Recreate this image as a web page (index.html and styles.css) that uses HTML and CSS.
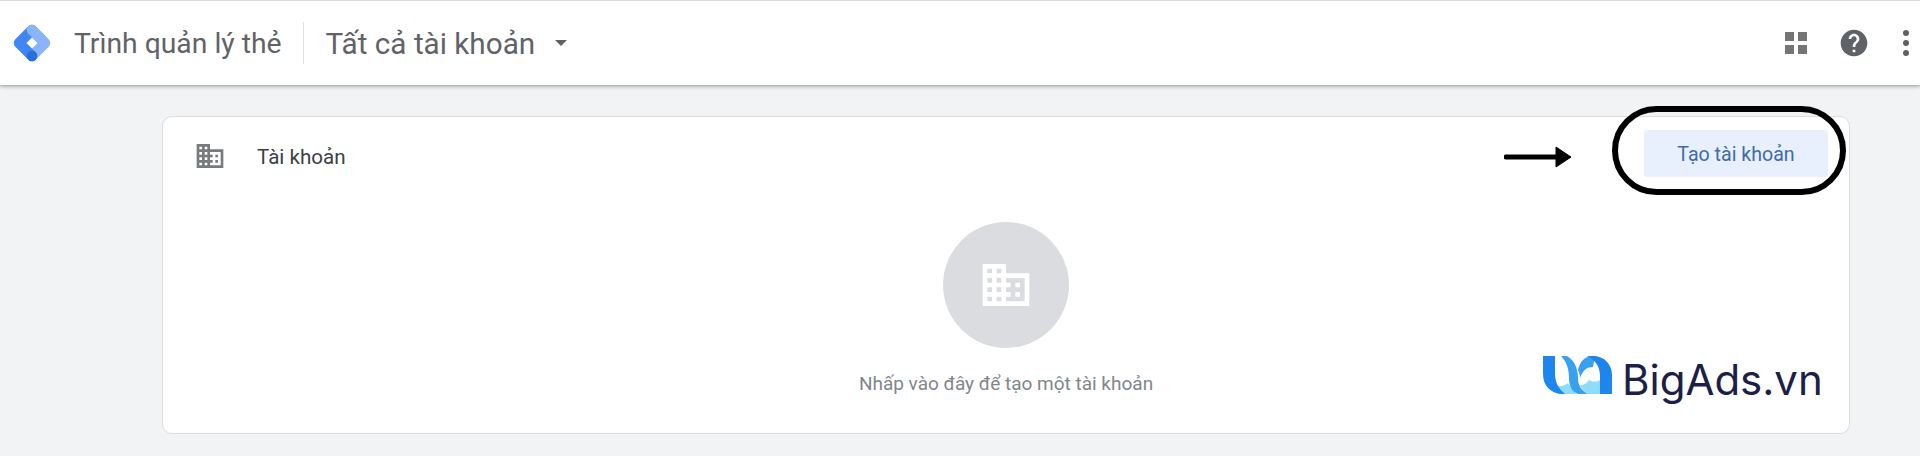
FILE: index.html
```html
<!DOCTYPE html>
<html lang="vi">
<head>
<meta charset="utf-8">
<title>Trình quản lý thẻ</title>
<link rel="stylesheet" href="styles.css">
</head>
<body>
<header class="topbar">
  <svg class="gtm-logo" viewBox="0 0 40 40" width="40" height="40">
    <path d="M20 7 L33 20 L20 33" fill="none" stroke="#8ab4f8" stroke-width="10.5" stroke-linecap="round" stroke-linejoin="round"/>
    <path d="M20 7 L7 20 L20 33" fill="none" stroke="#4285f4" stroke-width="10.5" stroke-linecap="round" stroke-linejoin="round"/>
    <path d="M20 7 L29 16" fill="none" stroke="#8ab4f8" stroke-width="10.5" stroke-linecap="round"/>
    <circle cx="20" cy="33" r="5.3" fill="#2a6fdb"/>
  </svg>
  <span class="product">Trình quản lý thẻ</span>
  <span class="divider"></span>
  <span class="account">Tất cả tài khoản</span>
  <span class="caret"></span>
  <div class="actions">
    <svg class="apps" viewBox="0 0 22 22" width="22" height="22">
      <rect x="0" y="0" width="9" height="9"/><rect x="13" y="0" width="9" height="9"/>
      <rect x="0" y="13" width="9" height="9"/><rect x="13" y="13" width="9" height="9"/>
    </svg>
    <svg class="help" viewBox="0 0 24 24" width="32" height="32">
      <path d="M12 2C6.48 2 2 6.48 2 12s4.48 10 10 10 10-4.48 10-10S17.52 2 12 2zm1 17h-2v-2h2v2zm2.07-7.75l-.9.92C13.45 12.9 13 13.5 13 15h-2v-.5c0-1.1.45-2.1 1.17-2.83l1.24-1.26c.37-.36.59-.86.59-1.41 0-1.1-.9-2-2-2s-2 .9-2 2H8c0-2.21 1.79-4 4-4s4 1.79 4 4c0 .88-.36 1.68-.93 2.25z"/>
    </svg>
    <svg class="more" viewBox="0 0 6 26" width="6" height="26">
      <circle cx="3" cy="3" r="3"/><circle cx="3" cy="13" r="3"/><circle cx="3" cy="23" r="3"/>
    </svg>
  </div>
</header>
<main class="content">
  <section class="card">
    <div class="card-head">
      <svg class="domain" viewBox="0 0 24 24" width="32" height="32">
        <path d="M12 7V3H2v18h20V7H12zM6 19H4v-2h2v2zm0-4H4v-2h2v2zm0-4H4V9h2v2zm0-4H4V5h2v2zm4 12H8v-2h2v2zm0-4H8v-2h2v2zm0-4H8V9h2v2zm0-4H8V5h2v2zm10 12h-8v-2h2v-2h-2v-2h2v-2h-2V9h8v10zm-2-8h-2v2h2v-2zm0 4h-2v2h2v-2z"/>
      </svg>
      <span class="card-title">Tài khoản</span>
      <button class="create">Tạo tài khoản</button>
    </div>
    <div class="empty">
      <div class="empty-circle">
        <svg class="domain-white" viewBox="0 0 24 24" width="56" height="56">
          <path d="M12 7V3H2v18h20V7H12zM6 19H4v-2h2v2zm0-4H4v-2h2v2zm0-4H4V9h2v2zm0-4H4V5h2v2zm4 12H8v-2h2v2zm0-4H8v-2h2v2zm0-4H8V9h2v2zm0-4H8V5h2v2zm10 12h-8v-2h2v-2h-2v-2h2v-2h-2V9h8v10zm-2-8h-2v2h2v-2zm0 4h-2v2h2v-2z" fill-rule="evenodd"/>
        </svg>
      </div>
      <p class="empty-text">Nhấp vào đây để tạo một tài khoản</p>
    </div>
    <svg class="arrow" viewBox="0 0 68 24" width="68" height="24">
      <path d="M2 12 H52" stroke="#000" stroke-width="5" stroke-linecap="round" fill="none"/>
      <path d="M52 2 L67 12 L52 22 Z" fill="#000" stroke="#000" stroke-width="1" stroke-linejoin="round"/>
    </svg>
    <div class="oval"></div>
    <div class="brand">
      <svg class="brand-mark" viewBox="0 0 69 38" width="69" height="38">
        <path d="M8 30 C14 31 20 31 25 27 L33 38 H20 C15 38 11 35 8 30 Z" fill="#8fdcf8"/>
        <path d="M0 0 H12 V17 C12 26 15 32 22 38 H20 C8 38 0 30 0 18 Z" fill="#1c86ee"/>
        <path d="M18 0 H24 C31 4 35 12 35 22 C35 30 39 35 45 38 H35 C29 36 26 30 26 22 C26 12 23 5 18 0 Z" fill="#39a0ef"/>
        <path d="M46 24 C50 26 54 26 57 24 V38 H45 C41 36 38 33 37 29 C41 29 44 27 46 24 Z" fill="#8fdcf8"/>
        <path d="M35 14 C37 5 42 0 50 0 H52 L50 11 C44 11 40 14 37 22 C37 19 36 16 35 14 Z" fill="#39a0ef"/>
        <path d="M44 0 H50 C61 0 69 8 69 19 V38 H57 V20 C57 10 52 4 44 0 Z" fill="#1c86ee"/>
      </svg>
      <span class="brand-name">BigAds.vn</span>
    </div>
  </section>
</main>
</body>
</html>
```
FILE: styles.css
```css
* { box-sizing: border-box; }
html, body { margin: 0; height: 100%; }
body {
  background: #f1f3f4;
  font-family: Roboto, "Noto Sans", sans-serif;
  color: #3c4043;
  overflow: hidden;
}
.topbar {
  height: 85px;
  background: #fff;
  border-top: 1px solid #dcdcdc;
  box-shadow: 0 1px 4px rgba(60, 64, 67, .55);
  display: flex;
  align-items: center;
  padding-left: 12px;
  position: relative;
}
.gtm-logo { flex: none; }
.product, .account { color: #5f6368; white-space: nowrap; }
.product { font-size: 28.3px; margin-left: 22px; }
.divider { width: 1px; height: 42px; background: #e0e0e0; margin-left: 21px; }
.account { font-size: 29.7px; margin-left: 22px; }
.caret {
  width: 0; height: 0;
  margin-left: 20px;
  border-left: 6px solid transparent;
  border-right: 6px solid transparent;
  border-top: 6px solid #5f6368;
}
.actions {
  margin-left: auto;
  display: flex;
  align-items: center;
  gap: 31px;
  padding-right: 11px;
}
.actions svg { flex: none; display: block; fill: #5f6368; }
.actions .apps { fill: #757575; }
.help { margin-right: 2px; }
.content { padding: 31px 70px 0 162px; }
.card {
  position: relative;
  height: 318px;
  background: #fff;
  border: 1px solid #dadce0;
  border-radius: 10px;
}
.card-head {
  height: 78px;
  display: flex;
  align-items: center;
  padding: 0 21px 0 31px;
}
.domain { fill: #777a7e; flex: none; }
.card-title { margin: 2px 0 0 31px; font-size: 20.6px; color: #3c4043; }
.create {
  margin: -5px 0 0 auto;
  width: 184px;
  height: 47px;
  padding: 2px 0 0;
  border: 0;
  border-radius: 3px;
  background: #e8f0fe;
  color: #3f6aa8;
  font: 400 19.6px Roboto, sans-serif;
}
.empty { display: flex; flex-direction: column; align-items: center; padding-top: 27px; }
.empty-circle {
  width: 126px;
  height: 126px;
  border-radius: 50%;
  background: #dadce0;
  display: flex;
  align-items: center;
  justify-content: center;
}
.domain-white { fill: #fff; }
.empty-text { margin: 24px 0 0; font-size: 19px; color: #80868b; }
.arrow { position: absolute; left: 1341px; top: 28px; }
.oval {
  position: absolute;
  left: 1449px;
  top: -11px;
  width: 234px;
  height: 89px;
  border: 6px solid #000;
  border-radius: 45px;
}
.brand {
  position: absolute;
  left: 1380px;
  top: 239px;
  display: flex;
  align-items: flex-start;
  gap: 10px;
}
.brand-mark { flex: none; }
.brand-name {
  font-family: Inter, sans-serif;
  font-size: 42px;
  font-weight: 400;
  line-height: 46px;
  margin-top: 1px;
  color: #1a2046;
  white-space: nowrap;
}
```
